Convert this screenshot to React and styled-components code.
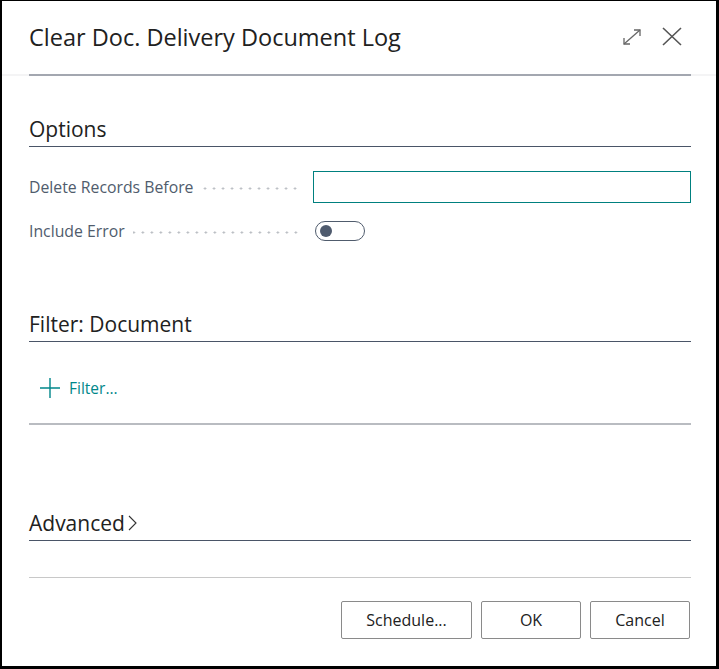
import React from "react";
import styled, { createGlobalStyle } from "styled-components";

const Global = createGlobalStyle`
html,body{margin:0;padding:0;background:#fff;}
*{box-sizing:border-box;}
`

const Dialog = styled.div`
width:719px;
height:669px;
border-style:solid;
border-color:#000;
border-width:1px 3px 3px 2px;
background:#fff;
display:flex;
flex-direction:column;
font-family:"Open Sans","Noto Sans",sans-serif;
color:#212121;
`
const TitleRow = styled.div`
height:73px;
display:flex;
align-items:center;
justify-content:space-between;
padding:0 34px 2px 27px;
`
const Title = styled.h1`
margin:0;
font-size:23.5px;
font-weight:400;
line-height:32px;
color:#212121;
`
const Icons = styled.div`
display:flex;
align-items:center;
gap:21px;
color:#555;
`
const HeaderBand = styled.div`
height:2px;
background:#f4f4f5;
padding:0 25px 0 27px;
`
const Rule = styled.div`
height:${p => p.$h || 1}px;
background:${p => p.$c || "#4a5567"};
`
const Body = styled.div`
padding:0 25px 0 27px;
display:flex;
flex-direction:column;
`
const Heading = styled.h2`
margin:${p => p.$top}px 0 0;
font-size:21px;
font-weight:400;
line-height:28px;
padding-bottom:3px;
border-bottom:1px solid #4a5567;
color:#212121;
display:flex;
align-items:center;
gap:3px;
`
const FieldRow = styled.div`
margin-top:${p => p.$top}px;
height:32px;
display:grid;
grid-template-columns:271px 1fr;
column-gap:13px;
align-items:center;
`
const Label = styled.div`
display:flex;
align-items:center;
gap:8px;
font-size:15.8px;
color:#505c6d;
white-space:nowrap;
`
const Leader = styled.span`
flex:1;
height:3px;
margin-top:3px;
background-image:radial-gradient(circle, #b4b8be 0.9px, transparent 1.3px);
background-size:9px 3px;
background-repeat:repeat-x;
background-position:right center;
`
const TextInput = styled.input`
width:100%;
height:32px;
border:1px solid #00807f;
outline:none;
padding:0 8px;
font:inherit;
font-size:15px;
`
const Toggle = styled.div`
width:50px;
height:20px;
margin-left:2px;
border:1px solid #505c6d;
border-radius:10px;
display:flex;
align-items:center;
padding-left:4px;
`
const Knob = styled.span`
width:12px;
height:12px;
border-radius:50%;
background:#4f5b6e;
`
const FilterLink = styled.div`
margin-top:30px;
height:32px;
display:flex;
align-items:center;
gap:9px;
padding-left:11px;
color:#00878a;
font-size:15.5px;
`
const Footer = styled.div`
display:flex;
justify-content:flex-end;
gap:9px;
padding:23px 26px 0 27px;
`
const Button = styled.button`
height:38px;
width:${p => p.$w}px;
background:#fff;
border:1px solid #8a8a8a;
border-radius:2px;
font-family:"Open Sans","Noto Sans",sans-serif;
font-size:16px;
color:#212121;
`

export default function App() {
  return (<>
    <Global />
    <Dialog>
      <TitleRow>
        <Title>Clear Doc. Delivery Document Log</Title>
        <Icons>
          <svg width="18" height="16" viewBox="0 0 18 16" fill="none" stroke="#666" strokeWidth="1.3">
            <path d="M1 15 L17 1" />
            <path d="M11 1 H17 V7" />
            <path d="M1 9 V15 H7" />
          </svg>
          <svg width="20" height="19" viewBox="0 0 20 19" fill="none" stroke="#555" strokeWidth="1.6">
            <path d="M1 1 L19 18 M19 1 L1 18" />
          </svg>
        </Icons>
      </TitleRow>
      <HeaderBand><Rule $h={2} $c="#a3a7b0" /></HeaderBand>
      <Body>
        <Heading $top={39}>Options</Heading>
        <FieldRow $top={24}>
          <Label>Delete Records Before<Leader /></Label>
          <TextInput />
        </FieldRow>
        <FieldRow $top={12}>
          <Label>Include Error<Leader /></Label>
          <Toggle><Knob /></Toggle>
        </FieldRow>
        <Heading $top={63}>Filter: Document</Heading>
        <FilterLink>
          <svg width="20" height="20" viewBox="0 0 20 20" fill="none" stroke="#00878a" strokeWidth="1.4">
            <path d="M10 0 V20 M0 10 H20" />
          </svg>
          Filter...
        </FilterLink>
        <Rule $h={2} $c="#b9bcc1" style={{ marginTop: 19 }} />
        <Heading $top={84}>
          Advanced
          <svg width="9" height="16" viewBox="0 0 9 16" fill="none" stroke="#333" strokeWidth="1.1">
            <path d="M1 1 L8 8 L1 15" />
          </svg>
        </Heading>
      </Body>
      <Body><Rule $c="#c8c8c8" style={{ marginTop: 36 }} /></Body>
      <Footer>
        <Button $w={131}>Schedule...</Button>
        <Button $w={100}>OK</Button>
        <Button $w={100}>Cancel</Button>
      </Footer>
    </Dialog>
  </>)
}
